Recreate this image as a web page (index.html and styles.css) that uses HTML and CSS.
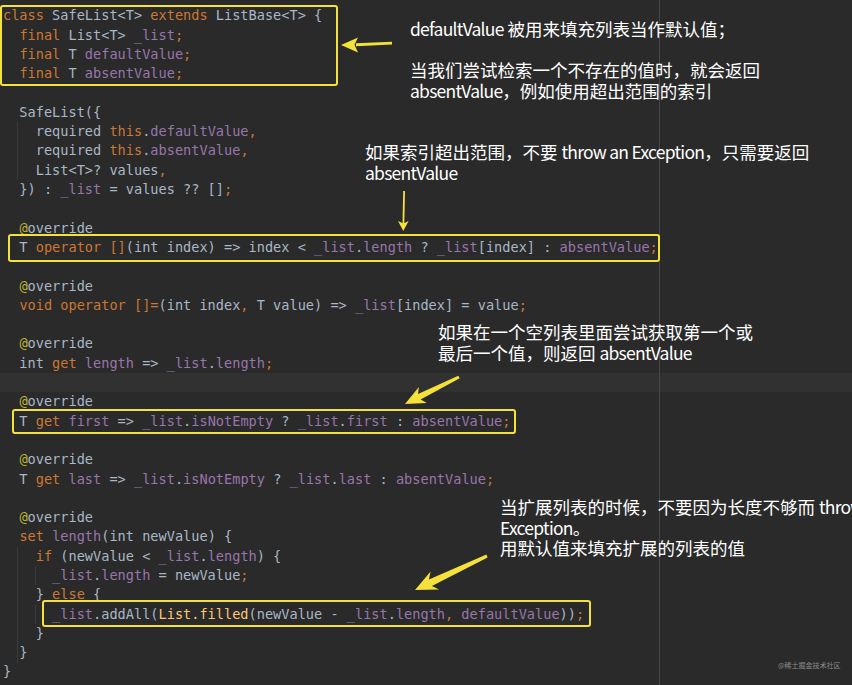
FILE: index.html
```html
<!DOCTYPE html>
<html lang="zh-CN">
<head>
  <meta charset="UTF-8" />
  <meta name="viewport" content="width=device-width, initial-scale=1.0" />
  <title>SafeList</title>
  <link rel="stylesheet" href="styles.css">
</head>

<body>
  <div class="editor">
    <!-- Code -->
    <div class="code">
      <div class="ln"><span class="kw">class</span> SafeList&lt;T&gt; <span class="kw">extends</span> ListBase&lt;T&gt; {</div>
      <div class="ln">  <span class="kw">final</span> List&lt;T&gt; <span class="fld">_list</span><span class="kw">;</span></div>
      <div class="ln">  <span class="kw">final</span> T <span class="fld">defaultValue</span><span class="kw">;</span></div>
      <div class="ln">  <span class="kw">final</span> T <span class="fld">absentValue</span><span class="kw">;</span></div>
      <div class="ln"></div>
      <div class="ln">  SafeList({</div>
      <div class="ln">    required <span class="kw">this</span>.<span class="fld">defaultValue</span><span class="kw">,</span></div>
      <div class="ln">    required <span class="kw">this</span>.<span class="fld">absentValue</span><span class="kw">,</span></div>
      <div class="ln">    List&lt;T&gt;? values<span class="kw">,</span></div>
      <div class="ln">  }) : <span class="fld">_list</span> = values ?? []<span class="kw">;</span></div>
      <div class="ln"></div>
      <div class="ln">  <span class="at">@</span>override</div>
      <div class="ln">  T <span class="kw">operator []</span>(int index) =&gt; index &lt; <span class="fld">_list</span>.<span class="fld">length</span> ? <span class="fld">_list</span>[index] : <span class="fld">absentValue</span><span class="kw">;</span></div>
      <div class="ln"></div>
      <div class="ln">  <span class="at">@</span>override</div>
      <div class="ln">  <span class="kw">void operator []=</span>(int index<span class="kw">,</span> T value) =&gt; <span class="fld">_list</span>[index] = value<span class="kw">;</span></div>
      <div class="ln"></div>
      <div class="ln">  <span class="at">@</span>override</div>
      <div class="ln">  int <span class="kw">get</span> <span class="fld">length</span> =&gt; <span class="fld">_list</span>.<span class="fld">length</span><span class="kw">;</span></div>
      <div class="ln current"></div>
      <div class="ln">  <span class="at">@</span>override</div>
      <div class="ln">  T <span class="kw">get</span> <span class="fld">first</span> =&gt; <span class="fld">_list</span>.<span class="fld">isNotEmpty</span> ? <span class="fld">_list</span>.<span class="fld">first</span> : <span class="fld">absentValue</span><span class="kw">;</span></div>
      <div class="ln"></div>
      <div class="ln">  <span class="at">@</span>override</div>
      <div class="ln">  T <span class="kw">get</span> <span class="fld">last</span> =&gt; <span class="fld">_list</span>.<span class="fld">isNotEmpty</span> ? <span class="fld">_list</span>.<span class="fld">last</span> : <span class="fld">absentValue</span><span class="kw">;</span></div>
      <div class="ln"></div>
      <div class="ln">  <span class="at">@</span>override</div>
      <div class="ln">  <span class="kw">set</span> <span class="fld">length</span>(int newValue) {</div>
      <div class="ln">    <span class="kw">if</span> (newValue &lt; <span class="fld">_list</span>.<span class="fld">length</span>) {</div>
      <div class="ln">      <span class="fld">_list</span>.<span class="fld">length</span> = newValue<span class="kw">;</span></div>
      <div class="ln">    } <span class="kw">else</span> {</div>
      <div class="ln">      <span class="fld">_list</span>.addAll(<span class="fn">List.filled</span>(newValue - <span class="fld">_list</span>.<span class="fld">length</span><span class="kw">,</span> <span class="fld">defaultValue</span>))<span class="kw">;</span></div>
      <div class="ln">    }</div>
      <div class="ln">  }</div>
      <div class="ln">}</div>
    </div>

    <!-- Editor chrome -->
    <div class="margin-line"></div>
    <div class="guide guide-ctor"></div>
    <div class="guide guide-set"></div>
    <div class="guide guide-if"></div>
    <div class="guide guide-else"></div>

    <!-- Highlight boxes -->
    <div class="hl-box box-fields"></div>
    <div class="hl-box box-index"></div>
    <div class="hl-box box-first"></div>
    <div class="hl-box box-fill"></div>

    <!-- Arrows -->
    <svg class="arrows" width="852" height="685" viewBox="0 0 852 685">
      <g fill="#f4e13a">
        <path d="M392 41.8 L356 43.3 L356 46.2 L392 44.6 Z" />
        <path d="M341 45 L358 37.5 L354.5 44.8 L358 52.5 Z" />
        <path d="M403.2 191 L405 191 L404.3 224 L402.5 224 Z" />
        <path d="M403.3 231 L398 221 L403.4 223.5 L408.6 221 Z" />
        <path d="M458.3 375.7 L418 394.1 L418.9 387.1 L405 404 L426.9 403.1 L420.6 399.5 L459.7 378.3 Z" />
        <path d="M486.4 554.6 L428.9 579.5 L430.6 571.6 L415 590 L439.2 589.6 L431.9 585.9 L487.6 557.4 Z" />
      </g>
    </svg>

    <!-- Notes -->
    <div class="note note-fields">
      <div class="note-line"><span class="lat">defaultValue</span> 被用来填充列表当作默认值；</div>
      <div class="note-line"></div>
      <div class="note-line">当我们尝试检索一个不存在的值时，就会返回</div>
      <div class="note-line"><span class="lat">absentValue</span>，例如使用超出范围的索引</div>
    </div>

    <div class="note note-index">
      <div class="note-line">如果索引超出范围，不要 <span class="lat">throw an Exception</span>，只需要返回</div>
      <div class="note-line"><span class="lat">absentValue</span></div>
    </div>

    <div class="note note-first">
      <div class="note-line">如果在一个空列表里面尝试获取第一个或</div>
      <div class="note-line">最后一个值，则返回 <span class="lat">absentValue</span></div>
    </div>

    <div class="note note-fill">
      <div class="note-line">当扩展列表的时候，不要因为长度不够而 <span class="lat">throw</span></div>
      <div class="note-line"><span class="lat">Exception</span>。</div>
      <div class="note-line">用默认值来填充扩展的列表的值</div>
    </div>

    <div class="watermark">@稀土掘金技术社区</div>
  </div>
</body>
</html>
```

FILE: styles.css
```css
body {
  margin: 0;
  background-color: #2a2a2a;
  overflow: hidden;
}

.editor {
  position: relative;
  width: 852px;
  height: 685px;
  overflow: hidden;
}

/* Code area */
.code {
  padding: 6.4px 0 0 3px;
  font-family: 'DejaVu Sans Mono', monospace;
  font-size: 13.6px;
  color: #a9b7c6;
}

.ln {
  height: 19.3px;
  line-height: 19.3px;
  white-space: pre;
}

.ln.current {
  background-color: #313131;
  margin-left: -3px;
}

.kw {
  color: #cc7832;
}

.fld {
  color: #9876aa;
}

.at {
  color: #bbb529;
}

.fn {
  color: #ffc66d;
}

/* Editor chrome */
.margin-line {
  position: absolute;
  left: 659px;
  top: 0;
  bottom: 0;
  width: 1px;
  background-color: #464646;
}

.guide {
  position: absolute;
  width: 1px;
  background-color: #3a3a3a;
}

.guide-ctor {
  left: 17px;
  top: 122px;
  height: 58px;
}

.guide-set {
  left: 17px;
  top: 547px;
  height: 116px;
}

.guide-if {
  left: 35px;
  top: 566px;
  height: 19px;
}

.guide-else {
  left: 35px;
  top: 605px;
  height: 19px;
}

/* Highlight boxes */
.hl-box {
  position: absolute;
  box-sizing: border-box;
  border: 2px solid #f4e13a;
  border-radius: 3px;
}

.box-fields {
  left: 0;
  top: 5px;
  width: 338px;
  height: 81px;
}

.box-index {
  left: 8px;
  top: 234px;
  width: 652px;
  height: 28px;
}

.box-first {
  left: 12px;
  top: 409px;
  width: 504px;
  height: 25px;
}

.box-fill {
  left: 42px;
  top: 600px;
  width: 549px;
  height: 27px;
}

.arrows {
  position: absolute;
  left: 0;
  top: 0;
}

/* Notes */
.note {
  position: absolute;
  font-family: 'Noto Sans CJK SC', sans-serif;
  font-size: 17.5px;
  line-height: 20.5px;
  color: #ffffff;
}

.note-line {
  height: 20.5px;
  white-space: nowrap;
}

.lat {
  letter-spacing: -0.75px;
}

.note-fields {
  left: 410px;
  top: 19px;
}

.note-index {
  left: 365px;
  top: 142px;
}

.note-first {
  left: 438px;
  top: 322px;
}

.note-fill {
  left: 500px;
  top: 497px;
}

.watermark {
  position: absolute;
  left: 778px;
  top: 659px;
  font-family: 'Noto Sans CJK SC', sans-serif;
  font-size: 7px;
  line-height: 12px;
  color: #8c8c8c;
  white-space: nowrap;
}
```
